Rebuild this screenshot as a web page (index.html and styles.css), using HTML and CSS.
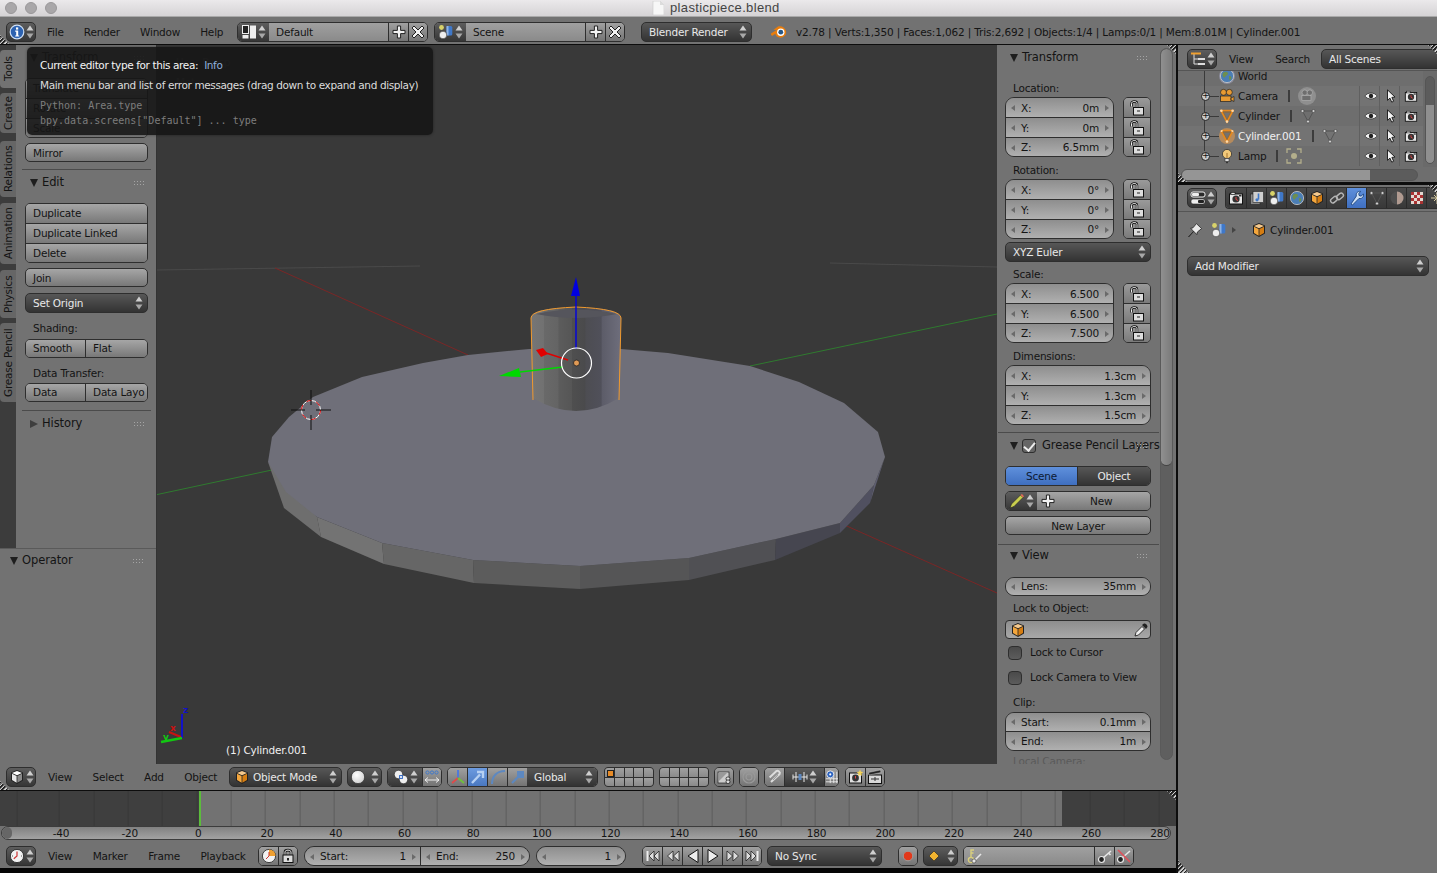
FILE: index.html
```html
<!DOCTYPE html>
<html lang="en">
<head>
<meta charset="utf-8">
<title>plasticpiece.blend</title>
<link rel="stylesheet" href="styles.css">
</head>
<body>
<svg class="defs" width="0" height="0" aria-hidden="true">
  <defs>
    <symbol id="updown" viewBox="0 0 8 14"><path d="M4 0.5 7.5 5.5H0.5Z" fill="#cfcfcf"/><path d="M4 13.5 7.5 8.5H0.5Z" fill="#a8a8a8"/></symbol>
    <symbol id="info" viewBox="0 0 16 16"><circle cx="8" cy="8" r="6.8" fill="#2d62b0" stroke="#cfe0f5" stroke-width="1.2"/><rect x="7" y="3.4" width="2.2" height="2.2" fill="#fff"/><path d="M6.2 6.6H9.2V11.4H10.2V12.6H6.2V11.4H7.2V7.8H6.2Z" fill="#fff"/></symbol>
    <symbol id="layout" viewBox="0 0 16 16"><rect x="1.5" y="1.5" width="6" height="8" fill="#222" stroke="#eee"/><rect x="9" y="1.5" width="6" height="13" fill="#eee"/><rect x="1.5" y="11" width="6" height="3.5" fill="#eee"/></symbol>
    <symbol id="plus" viewBox="0 0 16 16"><path d="M6.4 2H9.6V6.4H14V9.6H9.6V14H6.4V9.6H2V6.4H6.4Z" fill="#f2f2f2" stroke="#222" stroke-width="1"/></symbol>
    <symbol id="cross" viewBox="0 0 16 16"><path d="M4 2 8 6 12 2 14 4 10 8 14 12 12 14 8 10 4 14 2 12 6 8 2 4Z" fill="#f2f2f2" stroke="#222" stroke-width="1"/></symbol>
    <symbol id="scene" viewBox="0 0 16 16"><circle cx="3.5" cy="3.5" r="2.4" fill="#d8d26a"/><rect x="8.5" y="2" width="5.8" height="9.5" rx="1.5" fill="#3f78c9"/><rect x="8.5" y="2" width="2" height="9.5" fill="#8fb4e6"/><circle cx="5" cy="11" r="3.8" fill="#eee" stroke="#333" stroke-width=".6"/></symbol>
    <symbol id="logo" viewBox="0 0 18 16"><path d="M1 9.5 6.5 6 3.5 5.8 8 2.5C11 1.6 15 3 16 7 17 11.4 13 14 9.5 13.6 7 13.3 5.6 11.6 5.3 9.8L2.4 11.8C1.6 12 .6 10.4 1 9.5Z" fill="#e87d0d"/><circle cx="10.8" cy="8.2" r="3.7" fill="#fff"/><circle cx="10.8" cy="8.2" r="2.4" fill="#265787"/></symbol>
    <symbol id="cube" viewBox="0 0 16 16"><path d="M8 1 14 3.5V11.5L8 15 2 11.5V3.5Z" fill="#222"/><path d="M8 2 13 4 8 6.2 3 4Z" fill="#f5c98d"/><path d="M3 4.8 7.6 7V13.8L3 11Z" fill="#f4a63c"/><path d="M13 4.8 8.4 7V13.8L13 11Z" fill="#d57d12"/></symbol>
    <symbol id="cube3d" viewBox="0 0 16 16"><path d="M8 1 14 3.5V11.5L8 15 2 11.5V3.5Z" fill="#222"/><path d="M8 2 13 4 8 6.2 3 4Z" fill="#fff"/><path d="M3 4.8 7.6 7V13.8L3 11Z" fill="#e8e8e8"/><path d="M13 4.8 8.4 7V13.8L13 11Z" fill="#8a8a8a"/></symbol>
    <symbol id="lock" viewBox="0 0 16 16"><path d="M2.5 6.5V3.5C2.5.8 8 .8 8 3.5V8" fill="none" stroke="#111" stroke-width="2.4"/><path d="M2.5 6.5V3.5C2.5.8 8 .8 8 3.5V8" fill="none" stroke="#eee" stroke-width="1"/><rect x="4.5" y="7.5" width="10" height="7.5" fill="#ddd" stroke="#111"/><rect x="8" y="10.5" width="3" height="1" fill="#222"/></symbol>
    <symbol id="lockc" viewBox="0 0 16 16"><path d="M5 7V4C5 1.5 11 1.5 11 4V7" fill="none" stroke="#111" stroke-width="2.6"/><path d="M5 7V4C5 1.5 11 1.5 11 4V7" fill="none" stroke="#eee" stroke-width="1"/><rect x="3" y="7" width="10" height="7.5" fill="#ddd" stroke="#111"/><rect x="7" y="10" width="2" height="2.5" fill="#222"/></symbol>
    <symbol id="eye" viewBox="0 0 16 16"><path d="M1 8C4 3.5 12 3.5 15 8 12 12.5 4 12.5 1 8Z" fill="#f3f3f3" stroke="#222" stroke-width=".8"/><circle cx="8" cy="8" r="2.5" fill="#222"/></symbol>
    <symbol id="arrow" viewBox="0 0 16 16"><path d="M4 1V13L6.8 10.4 8.8 15 11 14 9 9.6 12.6 9.2Z" fill="#f3f3f3" stroke="#111"/></symbol>
    <symbol id="rcam" viewBox="0 0 16 16"><rect x="1.5" y="4" width="13" height="10" fill="#e8e8e8" stroke="#111"/><rect x="3" y="2.5" width="4" height="2" fill="#e8e8e8" stroke="#111" stroke-width=".6"/><circle cx="8" cy="9" r="3.6" fill="#333"/><path d="M8 7V9.5L10 10.5" stroke="#d44" fill="none"/><rect x="11" y="5" width="2.5" height="1.5" fill="#333"/></symbol>
    <symbol id="mesh" viewBox="0 0 16 16"><path d="M2 2.5H14L8 14Z" fill="#8c6a3f" stroke="#e8891c" stroke-width="1.6"/><path d="M5 4.8H11L8 10.8Z" fill="#727272"/><circle cx="2.4" cy="2.8" r="1.3" fill="#ffd9a8"/><circle cx="13.6" cy="2.8" r="1.3" fill="#ffd9a8"/><circle cx="8" cy="13.6" r="1.3" fill="#ffd9a8"/></symbol>
    <symbol id="meshg" viewBox="0 0 16 16"><path d="M2.5 3H13.5L8 13.5Z" fill="none" stroke="#555" stroke-width="1"/><circle cx="2.5" cy="3" r="1.5" fill="#cfcfcf" stroke="#333" stroke-width=".5"/><circle cx="13.5" cy="3" r="1.5" fill="#cfcfcf" stroke="#333" stroke-width=".5"/><circle cx="8" cy="13.5" r="1.5" fill="#cfcfcf" stroke="#333" stroke-width=".5"/></symbol>
    <symbol id="camobj" viewBox="0 0 16 16"><circle cx="4.5" cy="4.3" r="3" fill="#e89a32" stroke="#222" stroke-width=".7"/><circle cx="10.3" cy="4.3" r="3" fill="#e89a32" stroke="#222" stroke-width=".7"/><rect x="1.5" y="8" width="10.5" height="5.5" fill="#e89a32" stroke="#222" stroke-width=".7"/><path d="M12 10 15 8.5V13.5L12 12Z" fill="#e89a32" stroke="#222" stroke-width=".7"/></symbol>
    <symbol id="lamp" viewBox="0 0 16 16"><circle cx="8" cy="6" r="4.6" fill="#f2c97a" stroke="#333" stroke-width=".8"/><path d="M8 5V10" stroke="#a5722a"/><rect x="6" y="10.5" width="4" height="3.2" fill="#ddd" stroke="#333" stroke-width=".6"/><rect x="7" y="13.6" width="2" height="1.6" fill="#333"/></symbol>
    <symbol id="world" viewBox="0 0 16 16"><circle cx="8" cy="8" r="6.6" fill="#4b7eb5" stroke="#ccc" stroke-width=".8"/><path d="M4 5C6 3 9 3.5 9 6 8 8 6 7.5 6 9.5 4 10 3 7 4 5ZM10 8C12 7.5 13 9 12 11 11 12.5 9.5 12 10 10Z" fill="#6e8f4e"/></symbol>
    <symbol id="outliner" viewBox="0 0 16 16"><path d="M4 3V13H8M4 8H8" fill="none" stroke="#ddd"/><rect x="1" y="1.5" width="10" height="2" fill="#f0a030"/><rect x="8" y="7" width="7" height="2" fill="#ddd"/><rect x="8" y="12" width="7" height="2" fill="#ddd"/></symbol>
    <symbol id="propsicon" viewBox="0 0 16 16"><rect x="1" y="2" width="14" height="5" rx="2" fill="#2a2a2a" stroke="#eee"/><rect x="1" y="9" width="14" height="5" rx="2" fill="#eee" stroke="#222" stroke-width=".6"/><rect x="2" y="3" width="7" height="3" rx="1" fill="#eee"/><rect x="8" y="10" width="6" height="3" rx="1" fill="#222"/></symbol>
    <symbol id="renderlayer" viewBox="0 0 16 16"><rect x="1.5" y="4" width="9.5" height="10.5" fill="#8a8a8a" stroke="#222" stroke-width=".6"/><rect x="4" y="1.5" width="10.5" height="11" fill="#cfcfcf" stroke="#222" stroke-width=".6"/><path d="M9.5 3.5V9.5" stroke="#3f78c9" stroke-width="1.6"/><circle cx="8" cy="9.8" r="1.6" fill="#3f78c9"/></symbol>
    <symbol id="link" viewBox="0 0 16 16"><rect x="1.5" y="7.5" width="7.5" height="4.5" rx="2.2" transform="rotate(-40 5 10)" fill="none" stroke="#b5b5b5" stroke-width="1.4"/><rect x="7" y="4" width="7.5" height="4.5" rx="2.2" transform="rotate(-40 11 6)" fill="none" stroke="#b5b5b5" stroke-width="1.4"/></symbol>
    <symbol id="wrench" viewBox="0 0 16 16"><path d="M2 14 3.5 15 10 8.4C12.6 9.2 15 7 14.4 4L12 6.2 10 5.4 9.8 3.6 11.6 1.4C8.6 1 6.6 3.4 7.4 6Z" fill="#cfe0f5" stroke="#103a73" stroke-width=".8"/></symbol>
    <symbol id="material" viewBox="0 0 16 16"><circle cx="8" cy="8" r="6.5" fill="#4e4e4e"/><path d="M8 1.5A6.5 6.5 0 0 1 8 14.5Z" fill="#b09a90"/></symbol>
    <symbol id="texture" viewBox="0 0 16 16"><rect x="2" y="2" width="12" height="12" fill="#e3d9d2"/><path d="M2 2H5V5H2ZM8 2H11V5H8ZM5 5H8V8H5ZM11 5H14V8H11ZM2 8H5V11H2ZM8 8H11V11H8ZM5 11H8V14H5ZM11 11H14V14H11Z" fill="#a33"/></symbol>
    <symbol id="particle" viewBox="0 0 16 16"><path d="M8 2V14M2 8H14M5 5 11 11M11 5 5 11" stroke="#d6cba0" stroke-width="1"/></symbol>
    <symbol id="pin" viewBox="0 0 16 16"><path d="M1.5 15 6.6 9.2 3.6 6.4 6 5.8 9.4 1.6 14.6 6.6 10.4 10 9.8 12.6 6.8 9.4Z" fill="#e8e8e8" stroke="#222" stroke-width=".8"/></symbol>
    <symbol id="picker" viewBox="0 0 16 16"><path d="M2 14 3 10.5 9 4.5 11.5 7 5.5 13Z" fill="#eee" stroke="#111" stroke-width=".8"/><path d="M9 3 11 1.5C12.5.8 15 3.5 14.4 5L13 7Z" fill="#222"/></symbol>
    <symbol id="pencil" viewBox="0 0 16 16"><path d="M1 15 2.5 11 11.5 2 14 4.5 5 13.5Z" fill="#c9ce4e" stroke="#222" stroke-width=".6"/><path d="M11.5 2 14 4.5 15 3.2 13 1Z" fill="#e76b58"/></symbol>
    <symbol id="sphere" viewBox="0 0 16 16"><defs><radialGradient id="sg" cx=".4" cy=".35" r=".7"><stop offset="0" stop-color="#fff"/><stop offset="1" stop-color="#cfcfcf"/></radialGradient></defs><circle cx="8" cy="8" r="6.6" fill="url(#sg)" stroke="#222" stroke-width=".6"/></symbol>
    <symbol id="pivot" viewBox="0 0 16 16"><circle cx="5.5" cy="5.5" r="4.2" fill="#eee" stroke="#222" stroke-width=".6"/><circle cx="10.5" cy="10.5" r="4.2" fill="#eee" stroke="#222" stroke-width=".6"/><rect x="6.6" y="6.6" width="2.8" height="2.8" fill="#fff" stroke="#2a62c0"/></symbol>
    <symbol id="pointsel" viewBox="0 0 16 16"><circle cx="3.5" cy="3.5" r="1.6" fill="none" stroke="#3f78c9"/><circle cx="8" cy="3.5" r="1.6" fill="none" stroke="#3f78c9"/><circle cx="12.5" cy="3.5" r="1.6" fill="none" stroke="#3f78c9"/><path d="M1 11H15M1 11 4 8.5M1 11 4 13.5M15 11 12 8.5M15 11 12 13.5" stroke="#eee" fill="none"/></symbol>
    <symbol id="manip" viewBox="0 0 16 16"><path d="M8 9V1" stroke="#4a78e0" stroke-width="1.8"/><path d="M8 9 2 14" stroke="#e04a4a" stroke-width="1.8"/><path d="M8 9 14 14" stroke="#6fc23a" stroke-width="1.8"/></symbol>
    <symbol id="translate" viewBox="0 0 16 16"><path d="M2 14 10 5.5M7 3H13V9" fill="none" stroke="#b6d0f2" stroke-width="2.4"/></symbol>
    <symbol id="rotate" viewBox="0 0 16 16"><path d="M2 15C2 7 7 2 15 2" fill="none" stroke="#5d88c0" stroke-width="2"/></symbol>
    <symbol id="scale" viewBox="0 0 16 16"><path d="M2 14 9 7" stroke="#5d88c0" stroke-width="2.2"/><rect x="7" y="2" width="7" height="7" fill="#5d88c0"/></symbol>
    <symbol id="locklayer" viewBox="0 0 16 16"><rect x="2" y="3" width="11" height="11" fill="#ccc" stroke="#222" stroke-width=".7"/><path d="M3 12 12 3H3Z" fill="#999"/><rect x="10" y="8" width="4" height="3.5" rx="1.7" fill="#ddd" stroke="#222" stroke-width=".8"/><rect x="10" y="11" width="4" height="3.5" rx="1.7" fill="#ddd" stroke="#222" stroke-width=".8"/></symbol>
    <symbol id="proportional" viewBox="0 0 16 16"><circle cx="8" cy="8" r="6" fill="none" stroke="#999" stroke-width="1.2"/><circle cx="8" cy="8" r="3" fill="none" stroke="#999" stroke-width="1.2"/></symbol>
    <symbol id="magnet" viewBox="0 0 16 16"><path d="M4 13 12.6 5C13.7 3.2 11 1 9.2 2.2L2.6 8.5" fill="none" stroke="#ddd" stroke-width="2"/><path d="M5 9.5 9.2 5.4C9.8 5 11 6 10.4 6.8L6 11" fill="none" stroke="#999" stroke-width="1"/></symbol>
    <symbol id="snapinc" viewBox="0 0 16 16"><path d="M4 3V13M12 3V13M1 8H15M1 5.5V10.5M15 5.5V10.5" stroke="#e8e8e8"/><rect x="6.5" y="5" width="3" height="6" fill="#5d88c0"/></symbol>
    <symbol id="snapgrid" viewBox="0 0 16 16"><path d="M10 2V15M13.5 2V15M1 10H15M1 13.5H15M6 10V15" stroke="#eee"/><circle cx="6" cy="5" r="4" fill="#2a62c0" stroke="#eee"/><circle cx="6" cy="5" r="1.2" fill="#fff"/></symbol>
    <symbol id="rstill" viewBox="0 0 16 16"><rect x="1.5" y="4" width="12" height="10" fill="#e0e0e0" stroke="#111"/><circle cx="7.5" cy="9" r="3.4" fill="#333"/><path d="M7.5 7V9.5" stroke="#d44"/><path d="M12 0.5 13 2.7 15.4 3 13.6 4.6 14 7 12 5.7 10 7 10.4 4.6 8.6 3 11 2.7Z" fill="#f2d25a"/></symbol>
    <symbol id="ranim" viewBox="0 0 16 16"><rect x="1.5" y="6" width="13" height="8.5" fill="#d8d8d8" stroke="#111"/><path d="M1.5 3.5 13.5 1 14 3.5 2 6Z" fill="#222" stroke="#ddd" stroke-width=".4"/><path d="M4 10H12" stroke="#333"/><path d="M8 8V12" stroke="#333"/></symbol>
    <symbol id="clock" viewBox="0 0 16 16"><circle cx="8" cy="8" r="6.6" fill="#f2f2f2" stroke="#222" stroke-width=".8"/><path d="M8 3.6V8L4.8 10.8" fill="none" stroke="#c33" stroke-width="1.2"/><path d="M3.2 8H4M12 8H12.8" stroke="#333"/></symbol>
    <symbol id="preview" viewBox="0 0 16 16"><circle cx="8" cy="8" r="6.6" fill="#f2f2f2" stroke="#222" stroke-width=".8"/><path d="M8 1.4A6.6 6.6 0 0 1 14.6 8H8Z" fill="#f0a030"/><path d="M8 4V8L5 11" fill="none" stroke="#c33"/></symbol>
    <symbol id="tstart" viewBox="0 0 16 16"><path d="M2.5 3V13" stroke="#eee" stroke-width="2"/><path d="M9 3 4 8 9 13ZM14 3 9 8 14 13Z" fill="#ddd" stroke="#111" stroke-width=".7"/></symbol>
    <symbol id="tprev" viewBox="0 0 16 16"><path d="M8 3 2.5 8 8 13ZM14 3 8.5 8 14 13Z" fill="#ddd" stroke="#111" stroke-width=".7"/></symbol>
    <symbol id="tback" viewBox="0 0 16 16"><path d="M13 1.5V14.5L3 8Z" fill="#eee" stroke="#111"/></symbol>
    <symbol id="tplay" viewBox="0 0 16 16"><path d="M3 1.5V14.5L13 8Z" fill="#eee" stroke="#111"/></symbol>
    <symbol id="tnext" viewBox="0 0 16 16"><path d="M2 3 7.5 8 2 13ZM8 3 13.5 8 8 13Z" fill="#ddd" stroke="#111" stroke-width=".7"/></symbol>
    <symbol id="tend" viewBox="0 0 16 16"><path d="M13.5 3V13" stroke="#eee" stroke-width="2"/><path d="M2 3 7 8 2 13ZM7 3 12 8 7 13Z" fill="#ddd" stroke="#111" stroke-width=".7"/></symbol>
    <symbol id="record" viewBox="0 0 16 16"><circle cx="8" cy="8" r="4.8" fill="#e2381a" stroke="#9c9c9c"/></symbol>
    <symbol id="diamond" viewBox="0 0 16 16"><path d="M8 3 13 8 8 13 3 8Z" fill="#f2b430" stroke="#222" stroke-width=".6"/></symbol>
    <symbol id="keying" viewBox="0 0 16 16"><circle cx="4" cy="12" r="2.6" fill="none" stroke="#d9cf7c" stroke-width="1.4"/><path d="M4 9.5V2H7M4 5H6.5" fill="none" stroke="#d9cf7c" stroke-width="1.4"/><path d="M8 12 14 6" stroke="#e6e6e6" stroke-width="1.6"/><circle cx="7" cy="13" r="2" fill="#e6e6e6" stroke="#222" stroke-width=".5"/></symbol>
    <symbol id="key" viewBox="0 0 16 16"><circle cx="4.5" cy="11.5" r="3" fill="#222" stroke="#e6e6e6" stroke-width="1.2"/><path d="M6.5 9.5 14 3M11.5 5 13.5 7" stroke="#e6e6e6" stroke-width="1.6" fill="none"/></symbol>
    <symbol id="keyx" viewBox="0 0 16 16"><circle cx="4.5" cy="11.5" r="3" fill="#222" stroke="#e6e6e6" stroke-width="1.2"/><path d="M6.5 9.5 14 3" stroke="#e6e6e6" stroke-width="1.6" fill="none"/><path d="M2 2 14 14" stroke="#e0505a" stroke-width="1.6"/></symbol>
    <symbol id="camgray" viewBox="0 0 16 16"><circle cx="8" cy="8" r="8" fill="#8f8f8f"/><circle cx="6" cy="5" r="2.4" fill="#6e6e6e" stroke="#bbb" stroke-width=".5"/><circle cx="10.5" cy="5" r="2.4" fill="#6e6e6e" stroke="#bbb" stroke-width=".5"/><rect x="3.5" y="7.6" width="8" height="4.4" fill="#6e6e6e" stroke="#bbb" stroke-width=".5"/></symbol>
    <symbol id="lampdata" viewBox="0 0 16 16"><circle cx="8" cy="8" r="3" fill="#b3ae8c"/><path d="M1 5V1H5M11 1H15V5M15 11V15H11M5 15H1V11" fill="none" stroke="#b3ae8c" stroke-width="1.3"/></symbol>
    <symbol id="grip" viewBox="0 0 12 5"><path d="M0 0h1v1H0zM3 0h1v1H3zM6 0h1v1H6zM9 0h1v1H9zM0 3h1v1H0zM3 3h1v1H3zM6 3h1v1H6zM9 3h1v1H9z" fill="#a5a5a5"/></symbol>
  </defs>
</svg>

<header class="titlebar">
  <div class="lights"><i></i><i></i><i></i></div>
  <div class="doc">
    <svg class="docicon" viewBox="0 0 12 14"><path d="M1 0H8L12 4V14H1Z" fill="#f7f7f7" stroke="#c9c9c9" stroke-width=".6"/><path d="M8 0V4H12" fill="#dcdcdc"/></svg>
    <span>plasticpiece.blend</span>
  </div>
</header>

<div class="topbar">
  <span class="corner corner-tl"></span>
  <div class="ddicon"><svg class="ic16"><use href="#info"/></svg><svg class="ud"><use href="#updown"/></svg></div>
  <nav class="menu m-top"><span>File</span><span>Render</span><span>Window</span><span>Help</span></nav>
  <div class="wgroup w-screen">
    <div class="gicon"><svg class="ic16"><use href="#layout"/></svg><svg class="ud"><use href="#updown"/></svg></div>
    <div class="gfield">Default</div>
    <div class="gbtn"><svg class="ic16"><use href="#plus"/></svg></div>
    <div class="gbtn"><svg class="ic16"><use href="#cross"/></svg></div>
  </div>
  <div class="wgroup w-screen ml6">
    <div class="gicon"><svg class="ic16"><use href="#scene"/></svg><svg class="ud"><use href="#updown"/></svg></div>
    <div class="gfield">Scene</div>
    <div class="gbtn"><svg class="ic16"><use href="#plus"/></svg></div>
    <div class="gbtn"><svg class="ic16"><use href="#cross"/></svg></div>
  </div>
  <div class="drop w-render">Blender Render<svg class="ud"><use href="#updown"/></svg></div>
  <svg class="toplogo"><use href="#logo"/></svg>
  <div class="stats">v2.78 | Verts:1,350 | Faces:1,062 | Tris:2,692 | Objects:1/4 | Lamps:0/1 | Mem:8.01M | Cylinder.001</div>
</div>

<main class="workspace">
  <section class="leftcol">
    <div class="view3d">
      <div class="shelfcol">
        <div class="shelftop">
          <div class="tabs">
            <span class="tab t-tools active">Tools</span>
            <span class="tab t-create">Create</span>
            <span class="tab t-rel">Relations</span>
            <span class="tab t-anim">Animation</span>
            <span class="tab t-phys">Physics</span>
            <span class="tab t-gp">Grease Pencil</span>
          </div>
          <div class="shelf">
            <div class="phead mt3"><i class="tri down"></i>Transform<svg class="grip"><use href="#grip"/></svg></div>
            <div class="grp mt10"><div class="row btn">Translate</div><div class="row btn">Rotate</div><div class="row btn">Scale</div></div>
            <div class="single btn mt5">Mirror</div>
            <div class="sep mt7"></div>
            <div class="phead mt3"><i class="tri down"></i>Edit<svg class="grip"><use href="#grip"/></svg></div>
            <div class="grp mt10"><div class="row btn">Duplicate</div><div class="row btn">Duplicate Linked</div><div class="row btn">Delete</div></div>
            <div class="single btn mt5">Join</div>
            <div class="drop full mt6">Set Origin<svg class="ud"><use href="#updown"/></svg></div>
            <div class="label mt7">Shading:</div>
            <div class="split mt3"><div class="btn s60">Smooth</div><div class="btn sflex">Flat</div></div>
            <div class="label mt7">Data Transfer:</div>
            <div class="split mt2"><div class="btn s60">Data</div><div class="btn sflex">Data Layo</div></div>
            <div class="sep mt8"></div>
            <div class="phead mt3"><i class="tri right"></i>History<svg class="grip"><use href="#grip"/></svg></div>
          </div>
        </div>
        <div class="operator"><div class="phead ophead"><i class="tri down"></i>Operator<svg class="grip"><use href="#grip"/></svg></div></div>
      </div>

      <div class="canvas">
        <svg class="scene3d" viewBox="157 45 840 719" width="840" height="719">
          <defs>
            <linearGradient id="cyl" x1="0" x2="1" y1="0" y2="0">
              <stop offset="0" stop-color="#767676"/><stop offset=".14" stop-color="#717171"/>
              <stop offset=".15" stop-color="#696969"/><stop offset=".3" stop-color="#646464"/>
              <stop offset=".31" stop-color="#5c5c5c"/><stop offset=".45" stop-color="#565656"/>
              <stop offset=".46" stop-color="#4f4f4f"/><stop offset=".6" stop-color="#4a4a4c"/>
              <stop offset=".61" stop-color="#4d4d52"/><stop offset=".78" stop-color="#50505a"/>
              <stop offset=".79" stop-color="#5c5c68"/><stop offset="1" stop-color="#6e6e7c"/>
            </linearGradient>
          </defs>
          <rect x="157" y="45" width="840" height="719" fill="#393939"/>
          <path d="M157 270 420 266M830 263 997 267" stroke="#4a4a4a" fill="none"/>
          <path d="M275 268 468 355M840 523 997 593" stroke="#7a2626" fill="none"/>
          <path d="M155 495 272 470M750 366 997 314" stroke="#2f7a2f" fill="none"/>

          <path d="M268 462 317 517 321 537 284 508Z" fill="#6e6e6e"/>
          <path d="M317 517 382 543 384 564 321 537Z" fill="#737373"/>
          <path d="M382 543 473 560 474 583 384 564Z" fill="#666"/>
          <path d="M473 560 580 566 580 589 474 583Z" fill="#5c5c5c"/>
          <path d="M580 566 689 558 689 580 580 589Z" fill="#555556"/>
          <path d="M689 558 776 539 775 560 689 580Z" fill="#505054"/>
          <path d="M776 539 840 523 840 533 775 560Z" fill="#464650"/>
          <path d="M840 523 874 485 870 503 840 533Z" fill="#505060"/>
          <path d="M874 485 885 457 870 503Z" fill="#5e5e70"/>
          <path d="M268 462 272 437 289 417 313 397 362 377 423 363 468 355 529 349 621 349 668 353 750 366 799 382 844 403 878 432 885 457 874 485 840 523 776 539 689 558 580 566 473 560 382 543 317 517 286 492Z" fill="#6f6f79"/>

          <path d="M531 318 533 398Q576 424 619 398L621 318Q621 308 576 307 531 308 531 318Z" fill="url(#cyl)"/>
          <path d="M536 314Q576 305 617 314 576 322 536 314Z" fill="#55555c"/>
          <path d="M533 400 531 318Q531 309 576 307 621 309 621 318L619 400" fill="none" stroke="#f19a2e" stroke-width="1"/>

          <path d="M576 349V296" stroke="#0000e0" stroke-width="1.4"/>
          <path d="M576 277 580 296H571Z" fill="#0000e0"/>
          <path d="M568 360 546 353" stroke="#e00000" stroke-width="1.4"/>
          <path d="M536 350 543 348 548 354 541 357Z" fill="#e00000"/>
          <path d="M563 367 520 372" stroke="#00d800" stroke-width="1.4"/>
          <path d="M499 376 519 368 521 377Z" fill="#00d800"/>
          <circle cx="576.5" cy="363" r="15" fill="none" stroke="#fff" stroke-width="1.2"/>
          <circle cx="576.5" cy="363" r="3" fill="#e09a55" stroke="#222" stroke-width=".8"/>

          <circle cx="311" cy="410" r="9.5" fill="none" stroke="#fff" stroke-width="1"/>
          <circle cx="311" cy="410" r="9.5" fill="none" stroke="#e00000" stroke-width="1" stroke-dasharray="5 5"/>
          <path d="M311 390V405M311 415V430M291 410H305M316 410H331" stroke="#111" stroke-width="1"/>

          <path d="M182 738V714" stroke="#1212c8" stroke-width="2"/>
          <path d="M181 737 169 732" stroke="#c81212" stroke-width="2"/>
          <path d="M182 738 161 742" stroke="#12c812" stroke-width="2.4"/>
          <text class="axis az" x="183" y="713">z</text>
          <text class="axis ax" x="170" y="731">x</text>
          <text class="axis ay" x="163" y="740">y</text>

          <text class="overlay" x="226" y="754">(1) Cylinder.001</text>
          <text class="overlay dim" x="176" y="66">User Persp</text>
          <text class="overlay dim" x="176" y="86">Meters</text>
        </svg>
      </div>

      <aside class="npanel">
        <span class="corner corner-tr"></span>
        <div class="ncontent">
          <div class="phead mt3"><i class="tri down"></i>Transform<svg class="grip"><use href="#grip"/></svg></div>
          <div class="label mt12">Location:</div>
          <div class="vecrow mt1">
            <div class="grp fields">
              <div class="row num"><i class="al"></i><span>X:</span><b>0m</b><i class="ar"></i></div>
              <div class="row num"><i class="al"></i><span>Y:</span><b>0m</b><i class="ar"></i></div>
              <div class="row num"><i class="al"></i><span>Z:</span><b>6.5mm</b><i class="ar"></i></div>
            </div>
            <div class="grp locks">
              <div class="row lockb"><svg class="ic16"><use href="#lock"/></svg></div>
              <div class="row lockb"><svg class="ic16"><use href="#lock"/></svg></div>
              <div class="row lockb"><svg class="ic16"><use href="#lock"/></svg></div>
            </div>
          </div>
          <div class="label mt5">Rotation:</div>
          <div class="vecrow mt1">
            <div class="grp fields">
              <div class="row num"><i class="al"></i><span>X:</span><b>0°</b><i class="ar"></i></div>
              <div class="row num"><i class="al"></i><span>Y:</span><b>0°</b><i class="ar"></i></div>
              <div class="row num"><i class="al"></i><span>Z:</span><b>0°</b><i class="ar"></i></div>
            </div>
            <div class="grp locks">
              <div class="row lockb"><svg class="ic16"><use href="#lock"/></svg></div>
              <div class="row lockb"><svg class="ic16"><use href="#lock"/></svg></div>
              <div class="row lockb"><svg class="ic16"><use href="#lock"/></svg></div>
            </div>
          </div>
          <div class="drop full mt3">XYZ Euler<svg class="ud"><use href="#updown"/></svg></div>
          <div class="label mt4">Scale:</div>
          <div class="vecrow mt1">
            <div class="grp fields">
              <div class="row num"><i class="al"></i><span>X:</span><b>6.500</b><i class="ar"></i></div>
              <div class="row num"><i class="al"></i><span>Y:</span><b>6.500</b><i class="ar"></i></div>
              <div class="row num"><i class="al"></i><span>Z:</span><b>7.500</b><i class="ar"></i></div>
            </div>
            <div class="grp locks">
              <div class="row lockb"><svg class="ic16"><use href="#lock"/></svg></div>
              <div class="row lockb"><svg class="ic16"><use href="#lock"/></svg></div>
              <div class="row lockb"><svg class="ic16"><use href="#lock"/></svg></div>
            </div>
          </div>
          <div class="label mt5">Dimensions:</div>
          <div class="grp wide mt1">
            <div class="row num"><i class="al"></i><span>X:</span><b>1.3cm</b><i class="ar"></i></div>
            <div class="row num"><i class="al"></i><span>Y:</span><b>1.3cm</b><i class="ar"></i></div>
            <div class="row num"><i class="al"></i><span>Z:</span><b>1.5cm</b><i class="ar"></i></div>
          </div>
          <div class="sep nsep mt7"></div>
          <div class="phead haschk mt3"><i class="tri down"></i><i class="check"></i>Grease Pencil Layers<svg class="grip"><use href="#grip"/></svg></div>
          <div class="tabs2 mt10"><div class="tab2 on">Scene</div><div class="tab2">Object</div></div>
          <div class="newrow mt5">
            <div class="gicon pen"><svg class="ic16"><use href="#pencil"/></svg><svg class="ud"><use href="#updown"/></svg></div>
            <div class="newbody"><svg class="ic16"><use href="#plus"/></svg><span>New</span></div>
          </div>
          <div class="single btn center mt5">New Layer</div>
          <div class="sep nsep mt9"></div>
          <div class="phead mt1"><i class="tri down"></i>View<svg class="grip"><use href="#grip"/></svg></div>
          <div class="grp wide pill mt11"><div class="row num"><i class="al"></i><span>Lens:</span><b>35mm</b><i class="ar"></i></div></div>
          <div class="label mt4">Lock to Object:</div>
          <div class="objfield mt4"><svg class="ic16"><use href="#cube"/></svg><svg class="ic16"><use href="#picker"/></svg></div>
          <div class="chk mt5"><i></i>Lock to Cursor</div>
          <div class="chk mt8"><i></i>Lock Camera to View</div>
          <div class="label mt8">Clip:</div>
          <div class="grp wide two mt2">
            <div class="row num"><i class="al"></i><span>Start:</span><b>0.1mm</b><i class="ar"></i></div>
            <div class="row num"><i class="al"></i><span>End:</span><b>1m</b><i class="ar"></i></div>
          </div>
          <div class="label mt2 faded">Local Camera:</div>
        </div>
        <div class="nscroll"><div class="nthumb"></div></div>
      </aside>
    </div>

    <div class="hdr hdr3d">
      <span class="corner corner-bl"></span>
      <div class="ddicon"><svg class="ic16"><use href="#cube3d"/></svg><svg class="ud"><use href="#updown"/></svg></div>
      <nav class="menu m-3d"><span>View</span><span>Select</span><span>Add</span><span>Object</span></nav>
      <div class="drop w-mode"><svg class="ic16 mr3"><use href="#cube"/></svg>Object Mode<svg class="ud"><use href="#updown"/></svg></div>
      <div class="ddicon w-shade ml5"><svg class="ic16"><use href="#sphere"/></svg><svg class="ud"><use href="#updown"/></svg></div>
      <div class="wgroup ml5">
        <div class="gicon w-piv"><svg class="ic16"><use href="#pivot"/></svg><svg class="ud"><use href="#updown"/></svg></div>
        <div class="gbtn"><svg class="ic16"><use href="#pointsel"/></svg></div>
      </div>
      <div class="wgroup ml5">
        <div class="gbtn"><svg class="ic16"><use href="#manip"/></svg></div>
        <div class="gbtn blue"><svg class="ic16"><use href="#translate"/></svg></div>
        <div class="gbtn"><svg class="ic16"><use href="#rotate"/></svg></div>
        <div class="gbtn"><svg class="ic16"><use href="#scale"/></svg></div>
        <div class="darkdrop">Global<svg class="ud"><use href="#updown"/></svg></div>
      </div>
      <div class="layers ml6 first"><i></i><i></i><i></i><i></i><i></i><i></i><i></i><i></i><i></i><i></i></div>
      <div class="layers ml5"><i></i><i></i><i></i><i></i><i></i><i></i><i></i><i></i><i></i><i></i></div>
      <div class="wgroup ml5"><div class="gbtn"><svg class="ic16"><use href="#locklayer"/></svg></div></div>
      <div class="wgroup ml5"><div class="gbtn"><svg class="ic16"><use href="#proportional"/></svg></div></div>
      <div class="wgroup ml5">
        <div class="gbtn"><svg class="ic16"><use href="#magnet"/></svg></div>
        <div class="gicon w-snap"><svg class="ic16"><use href="#snapinc"/></svg><svg class="ud"><use href="#updown"/></svg></div>
        <div class="gbtn w-sg"><svg class="ic14"><use href="#snapgrid"/></svg></div>
      </div>
      <div class="wgroup ml6">
        <div class="gbtn"><svg class="ic16"><use href="#rstill"/></svg></div>
        <div class="gbtn"><svg class="ic16"><use href="#ranim"/></svg></div>
      </div>
    </div>

    <div class="timeline">
      <span class="corner corner-tr2"></span>
      <div class="tracks">
        <div class="outrange r-left"></div>
        <div class="playhead"></div>
        <div class="inrange"></div>
        <div class="outrange r-right"></div>
      </div>
      <div class="ruler">
        <span>-40</span><span>-20</span><span>0</span><span>20</span><span>40</span><span>60</span><span>80</span><span>100</span><span>120</span><span>140</span><span>160</span><span>180</span><span>200</span><span>220</span><span>240</span><span>260</span><span>280</span>
      </div>
    </div>

    <div class="hdr hdrtime">
      <div class="ddicon"><svg class="ic16"><use href="#clock"/></svg><svg class="ud"><use href="#updown"/></svg></div>
      <nav class="menu m-time"><span>View</span><span>Marker</span><span>Frame</span><span>Playback</span></nav>
      <div class="wgroup">
        <div class="gbtn"><svg class="ic16"><use href="#preview"/></svg></div>
        <div class="gbtn"><svg class="ic16"><use href="#lockc"/></svg></div>
      </div>
      <div class="grp pill2 ml6 w-range">
        <div class="num rangecell c-start"><i class="al"></i><span>Start:</span><b>1</b><i class="ar"></i></div>
        <div class="num rangecell c-end"><i class="al"></i><span>End:</span><b>250</b><i class="ar"></i></div>
      </div>
      <div class="grp pill2 ml6 w-cur"><div class="num rangecell c-cur"><i class="al"></i><b>1</b><i class="ar"></i></div></div>
      <div class="wgroup ml16">
        <div class="gbtn"><svg class="ic16"><use href="#tstart"/></svg></div>
        <div class="gbtn"><svg class="ic16"><use href="#tprev"/></svg></div>
        <div class="gbtn"><svg class="ic16"><use href="#tback"/></svg></div>
        <div class="gbtn"><svg class="ic16"><use href="#tplay"/></svg></div>
        <div class="gbtn"><svg class="ic16"><use href="#tnext"/></svg></div>
        <div class="gbtn"><svg class="ic16"><use href="#tend"/></svg></div>
      </div>
      <div class="drop w-sync ml5">No Sync<svg class="ud"><use href="#updown"/></svg></div>
      <div class="wgroup ml16"><div class="gbtn"><svg class="ic16"><use href="#record"/></svg></div></div>
      <div class="ddicon w-key ml5"><svg class="ic16"><use href="#diamond"/></svg><svg class="ud"><use href="#updown"/></svg></div>
      <div class="wgroup ml5">
        <div class="gfield w-kset"><svg class="ic16"><use href="#keying"/></svg></div>
        <div class="gbtn"><svg class="ic16"><use href="#key"/></svg></div>
        <div class="gbtn"><svg class="ic16"><use href="#keyx"/></svg></div>
      </div>
    </div>
    <div class="bottomgap"></div>
  </section>

  <section class="rightcol">
    <div class="outliner">
      <span class="corner corner-tr3"></span>
      <div class="hdr ohdr">
        <div class="ddicon"><svg class="ic16"><use href="#outliner"/></svg><svg class="ud"><use href="#updown"/></svg></div>
        <nav class="menu m-out"><span>View</span><span>Search</span></nav>
        <div class="drop w-all">All Scenes<svg class="ud"><use href="#updown"/></svg></div>
      </div>
      <div class="obody">
        <div class="olist">
          <div class="orow o-partial"><svg class="ic16 halo"><use href="#world"/></svg><span class="oname">World</span></div>
          <div class="orow alt"><i class="exp"></i><svg class="ic16"><use href="#camobj"/></svg><span class="oname">Camera</span><i class="bar"></i><svg class="ic18 mlicon"><use href="#camgray"/></svg><span class="ocols"><svg class="ic14"><use href="#eye"/></svg><svg class="ic14"><use href="#arrow"/></svg><svg class="ic14"><use href="#rcam"/></svg></span></div>
          <div class="orow"><i class="exp"></i><svg class="ic16"><use href="#mesh"/></svg><span class="oname">Cylinder</span><i class="bar"></i><svg class="ic16 mlicon"><use href="#meshg"/></svg><span class="ocols"><svg class="ic14"><use href="#eye"/></svg><svg class="ic14"><use href="#arrow"/></svg><svg class="ic14"><use href="#rcam"/></svg></span></div>
          <div class="orow alt"><i class="exp"></i><svg class="ic16 halo2"><use href="#mesh"/></svg><span class="oname white">Cylinder.001</span><i class="bar"></i><svg class="ic16 mlicon"><use href="#meshg"/></svg><span class="ocols"><svg class="ic14"><use href="#eye"/></svg><svg class="ic14"><use href="#arrow"/></svg><svg class="ic14"><use href="#rcam"/></svg></span></div>
          <div class="orow"><i class="exp"></i><svg class="ic16"><use href="#lamp"/></svg><span class="oname">Lamp</span><i class="bar"></i><svg class="ic16 mlicon"><use href="#lampdata"/></svg><span class="ocols"><svg class="ic14"><use href="#eye"/></svg><svg class="ic14"><use href="#arrow"/></svg><svg class="ic14"><use href="#rcam"/></svg></span></div>
        </div>
        <div class="oscroll"><div class="othumb"></div></div>
      </div>
      <div class="ohscroll"><div class="ohthumb"></div></div>
      <span class="corner corner-bl2"></span>
    </div>
    <div class="props">
      <span class="corner corner-tr4"></span>
      <div class="hdr phdr">
        <div class="ddicon"><svg class="ic16"><use href="#propsicon"/></svg><svg class="ud"><use href="#updown"/></svg></div>
        <div class="ptabs">
          <i><svg class="ic16"><use href="#rcam"/></svg></i>
          <i><svg class="ic16"><use href="#renderlayer"/></svg></i>
          <i><svg class="ic16"><use href="#scene"/></svg></i>
          <i><svg class="ic16"><use href="#world"/></svg></i>
          <i><svg class="ic16"><use href="#cube"/></svg></i>
          <i><svg class="ic16"><use href="#link"/></svg></i>
          <i class="on"><svg class="ic16"><use href="#wrench"/></svg></i>
          <i><svg class="ic16"><use href="#meshg"/></svg></i>
          <i><svg class="ic16"><use href="#material"/></svg></i>
          <i><svg class="ic16"><use href="#texture"/></svg></i>
          <i><svg class="ic16"><use href="#particle"/></svg></i>
        </div>
      </div>
      <div class="crumbs">
        <svg class="ic16"><use href="#pin"/></svg>
        <svg class="ic16 crumb2"><use href="#scene"/></svg>
        <i class="tri right small"></i>
        <svg class="ic16 crumb3"><use href="#cube"/></svg>
        <span>Cylinder.001</span>
      </div>
      <div class="drop w-addmod">Add Modifier<svg class="ud"><use href="#updown"/></svg></div>
      <span class="corner corner-bl3"></span>
    </div>
  </section>
</main>

<div class="tooltip">
  <p class="tt1">Current editor type for this area:<span>Info</span></p>
  <p class="tt2">Main menu bar and list of error messages (drag down to expand and display)</p>
  <p class="tt3">Python: Area.type</p>
  <p class="tt4">bpy.data.screens["Default"] ... type</p>
</div>
</body>
</html>
```

FILE: styles.css
```css
* { box-sizing: border-box; }
html, body { margin: 0; padding: 0; }
body {
  width: 1437px; height: 873px; overflow: hidden; position: relative;
  background: #000; color: #141414;
  font: 10.5px/1 "DejaVu Sans", sans-serif; letter-spacing: -.2px;
  display: flex; flex-direction: column;
}
.defs { position: absolute; }
svg { display: block; flex: none; }
.ic16 { width: 16px; height: 16px; }
.ic14 { width: 14px; height: 14px; }
.ic18 { width: 18px; height: 18px; }
.ud { width: 8px; height: 14px; flex: none; }
i { font-style: normal; display: block; flex: none; }

.mt1 { margin-top: 1px; } .mt2 { margin-top: 2px; } .mt3 { margin-top: 3px; } .mt4 { margin-top: 4px; }
.mt5 { margin-top: 5px; } .mt6 { margin-top: 6px; } .mt7 { margin-top: 7px; }
.mt8 { margin-top: 8px; } .mt9 { margin-top: 9px; } .mt10 { margin-top: 10px; }
.mt11 { margin-top: 11px; } .mt12 { margin-top: 12px; }
.ml5 { margin-left: 5px; } .ml6 { margin-left: 6px; } .ml16 { margin-left: 16px; }
.mr3 { margin-right: 3px; }

/* window chrome */
.titlebar {
  height: 17px; flex: none; display: flex; align-items: center; position: relative;
  background: linear-gradient(#ebe9eb, #d5d3d5);
  border-bottom: 1px solid #a9a9a9;
}
.lights { display: flex; gap: 8px; padding-left: 5px; }
.lights i { width: 12px; height: 12px; border-radius: 50%; background: #a9a7a9; border: 1px solid #9a989a; }
.doc { position: absolute; left: 652px; top: 0; height: 15px; display: flex; align-items: center; gap: 6px; font: 13px "Liberation Sans", sans-serif; letter-spacing: .35px; color: #444; }
.docicon { width: 12px; height: 14px; }

/* top info bar */
.topbar {
  height: 28px; flex: none; position: relative; display: flex; align-items: center;
  padding: 3px 0 0 6px; background: #727272; border-bottom: 1px solid #0d0d0d;
}
.ddicon {
  width: 30px; height: 20px; flex: none; display: flex; align-items: center; justify-content: center; gap: 1px;
  border: 1px solid #2e2e2e; border-radius: 5px; background: linear-gradient(#5d5d5d, #363636);
}
.menu { display: flex; gap: 20px; flex: none; color: #141414; }
.m-top { width: 201px; padding-left: 11px; }
.m-3d { width: 193px; padding-left: 12px; gap: 20.4px; }
.m-time { width: 222px; padding-left: 12px; gap: 20.5px; }
.m-out { width: 104px; padding-left: 12px; gap: 22px; }

.wgroup {
  display: flex; height: 20px; flex: none; border: 1px solid #2e2e2e; border-radius: 5px; overflow: hidden; background: #8a8a8a;
}
.w-screen { width: 191px; }
.gicon {
  width: 31px; flex: none; display: flex; align-items: center; justify-content: center; gap: 1px;
  background: linear-gradient(#5d5d5d, #363636);
}
.gfield {
  flex: 1; display: flex; align-items: center; padding-left: 7px;
  background: linear-gradient(#a0a0a0, #8a8a8a); color: #141414;
}
.gbtn {
  width: 20px; flex: none; display: flex; align-items: center; justify-content: center;
  background: linear-gradient(#a0a0a0, #747474); border-left: 1px solid #2e2e2e;
}
.wgroup .gbtn:first-child { width: 19px; border-left: 0; }
.wgroup .gbtn:last-child { width: 19px; }
.wgroup .gbtn:only-child { width: 18px; }
.wgroup .gbtn.w-sg { width: 14px; }
.gbtn.blue { background: linear-gradient(#6c9be0, #4a78c0); }
.drop {
  height: 20px; display: flex; align-items: center; justify-content: space-between; flex: none;
  padding: 0 4px 0 7px; border: 1px solid #2e2e2e; border-radius: 5px; color: #e8e8e8;
  background: linear-gradient(#575757, #333);
}
.full { width: 100%; }
.w-render { width: 111px; margin-left: 16px; }
.toplogo { width: 18px; height: 16px; margin-left: 18px; }
.stats { margin-left: 8px; color: #141414; white-space: nowrap; letter-spacing: -.14px; }

/* layout */
.workspace { flex: 1; min-height: 0; display: flex; }
.leftcol { width: 1177px; flex: none; display: flex; flex-direction: column; border-right: 1px solid #0d0d0d; }
.rightcol { width: 260px; flex: none; display: flex; flex-direction: column; background: #0d0d0d; }

.view3d { height: 719px; flex: none; display: flex; }
.shelfcol { width: 157px; flex: none; display: flex; flex-direction: column; border-right: 1px solid #333; }
.shelftop { height: 503px; flex: none; display: flex; background: #3c3c3c; }
.tabs { width: 16px; flex: none; display: flex; flex-direction: column; }
.tab {
  writing-mode: vertical-rl; transform: rotate(180deg); width: 16px; flex: none;
  display: flex; align-items: center; justify-content: center; background: #666; color: #141414;
  border-radius: 0 4px 4px 0;
}
.tab.active { background: #727272; }
.t-tools { height: 38px; margin-top: 5px; }
.t-create { height: 40px; margin-top: 5px; }
.t-rel { height: 56px; margin-top: 8px; }
.t-anim { height: 61px; margin-top: 6px; }
.t-phys { height: 48px; margin-top: 6px; }
.t-gp { height: 79px; margin-top: 5px; }

.shelf { width: 140px; flex: none; background: #727272; padding: 0 8px 0 9px; display: flex; flex-direction: column; }
.phead { height: 20px; flex: none; display: flex; align-items: center; position: relative; font-size: 11.5px; letter-spacing: -.1px; color: #141414; padding-left: 17px; white-space: nowrap; }
.haschk { padding-left: 37px; }
.grip { position: absolute; right: 2px; top: 8px; width: 12px; height: 5px; }
.tri { width: 0; height: 0; position: absolute; }
.tri.down { left: 5px; top: 6px; border: 4.5px solid transparent; border-top: 8px solid #1e1e1e; border-bottom: 0; }
.tri.right { left: 5px; top: 6px; border: 4.5px solid transparent; border-left: 8px solid #3e3e3e; border-right: 0; }
.tri.right.small { position: static; border-width: 3px; border-left-width: 4px; border-left-color: #444; }
.label { height: 16px; flex: none; display: flex; align-items: center; padding-left: 8px; color: #141414; white-space: nowrap; }
.faded { color: #5a5a5a; overflow: hidden; }
.sep { height: 1px; flex: none; background: #4b4b4b; margin-left: -3px; margin-right: -3px; }
.btn {
  display: flex; align-items: center; padding-left: 7px; color: #141414; white-space: nowrap; overflow: hidden;
  background: linear-gradient(#a6a6a6, #787878);
}
.single { height: 19px; flex: none; border: 1px solid #2e2e2e; border-radius: 5px; padding-top: 1px; }
.center { justify-content: center; padding-left: 0; }
.grp { display: flex; flex-direction: column; height: 60px; flex: none; border: 1px solid #2e2e2e; border-radius: 5px; overflow: hidden; }
.row { height: 20px; flex: none; border-top: 1px solid #2e2e2e; }
.row:first-child { height: 19px; border-top: 0; }
.row:last-child { height: 19px; }
.pill { height: 19px; border-radius: 9px; }
.pill .row { height: 17px; }
.two { height: 39px; border-radius: 9px; }
.two .row:first-child { height: 18px; }
.split { display: flex; height: 19px; flex: none; border: 1px solid #2e2e2e; border-radius: 5px; overflow: hidden; }
.s60 { width: 60px; flex: none; border-right: 1px solid #2e2e2e; }
.sflex { flex: 1; min-width: 0; }

.operator { flex: 1; background: #727272; padding: 0 9px 0 0; border-top: 1px solid #5a5a5a; }
.ophead { margin-top: 2px; margin-left: 5px; }
.ophead .tri { left: 5px; }

.canvas { width: 840px; flex: none; position: relative; background: #393939; }
.scene3d { position: absolute; inset: 0; }
.overlay { font: 10.5px "DejaVu Sans", sans-serif; letter-spacing: -.2px; fill: #f0f0f0; }
.overlay.dim { fill: #5c5c5c; }
.axis { font: 700 9px "DejaVu Sans", sans-serif; }
.az { fill: #1212c8; } .ax { fill: #c81212; } .ay { fill: #12c812; }

.npanel { width: 179px; flex: none; position: relative; display: flex; background: #727272; overflow: hidden; }
.ncontent { width: 163px; flex: none; padding: 0 9px 0 8px; display: flex; flex-direction: column; }
.vecrow { display: flex; justify-content: space-between; flex: none; }
.fields { width: 109px; border-radius: 9px; }
.locks { width: 28px; }
.lockb { display: flex; align-items: center; justify-content: center; background: linear-gradient(#9a9a9a, #7a7a7a); }
.wide { width: 100%; border-radius: 9px; }
.num {
  display: flex; align-items: center; padding: 1px 4px 0 5px; color: #141414;
  background: linear-gradient(#8e8e8e, #b0b0b0);
}
.pill .num, .two .row:first-child { padding-top: 0; }
.num span { margin-left: 6px; }
.num b { font-weight: 400; margin-left: auto; margin-right: 6px; }
.al, .ar { width: 0; height: 0; border: 3px solid transparent; }
.al { border-right: 4px solid #6a6a6a; border-left: 0; }
.ar { border-left: 4px solid #6a6a6a; border-right: 0; }
.nsep { margin-left: -7px; margin-right: -8px; }
.check {
  position: absolute; left: 17px; top: 3px; width: 14px; height: 14px; border: 1px solid #2e2e2e; border-radius: 3px; background: #666;
}
.check::after { content: ""; position: absolute; left: 3px; top: 0; width: 5px; height: 9px; border: solid #eee; border-width: 0 2px 2px 0; transform: rotate(40deg); }
.tabs2 { display: flex; height: 20px; flex: none; border: 1px solid #2e2e2e; border-radius: 5px; overflow: hidden; }
.tab2 { width: 72px; flex: none; display: flex; align-items: center; justify-content: center; color: #e8e8e8; background: linear-gradient(#575757, #333); }
.tab2 + .tab2 { flex: 1; }
.tab2.on { background: linear-gradient(#5f90dc, #3f6fc0); color: #0c1a33; border-right: 1px solid #2e2e2e; }
.newrow { display: flex; height: 20px; flex: none; border: 1px solid #2e2e2e; border-radius: 5px; overflow: hidden; }
.pen { width: 31px; }
.newbody { flex: 1; display: flex; align-items: center; position: relative; padding-left: 3px; background: linear-gradient(#a6a6a6, #787878); }
.newbody span { margin-left: 34px; }
.objfield { height: 19px; flex: none; display: flex; align-items: center; justify-content: space-between; padding: 0 1px 0 4px; border: 1px solid #2e2e2e; border-radius: 4px; background: linear-gradient(#8e8e8e, #a8a8a8); }
.chk { height: 17px; flex: none; display: flex; align-items: center; gap: 8px; padding-left: 3px; color: #141414; }
.chk i { width: 14px; height: 14px; border-radius: 4px; border: 1px solid #2e2e2e; background: linear-gradient(#4a4a4a, #5c5c5c); }
.nscroll { width: 13px; height: 712px; flex: none; margin-top: 3px; border: 1px solid #5a5a5a; border-radius: 7px; background: #5f5f5f; overflow: hidden; }
.nthumb { height: 417px; background: linear-gradient(90deg, #909090, #7a7a7a); border-radius: 6px; border-bottom: 1px solid #444; }

/* corners */
.corner {
  position: absolute; width: 9px; height: 9px; z-index: 3;
  background: repeating-linear-gradient(135deg, #cfcfcf 0 1px, #222 1px 2px, transparent 2px 3px);
}
.corner-tl, .corner-bl, .corner-bl2 { left: 0; bottom: 0; clip-path: polygon(0 0, 0 100%, 100% 100%); }
.corner-tr, .corner-tr2, .corner-tr3, .corner-tr4 { right: 0; top: 0; clip-path: polygon(0 0, 100% 0, 100% 100%); }
.corner-bl3 { left: 0; bottom: 0; width: 11px; height: 13px; clip-path: polygon(0 0, 0 100%, 100% 100%); }

/* headers */
.hdr { flex: none; display: flex; align-items: center; position: relative; background: #727272; padding-left: 6px; }
.hdr3d { height: 27px; border-bottom: 1px solid #0d0d0d; }
.hdrtime { height: 25px; padding-top: 1px; }
.bottomgap { flex: 1; background: #050505; }
.w-mode { width: 113px; justify-content: flex-start; padding-left: 4px; }
.w-mode .ud { margin-left: auto; }
.w-shade { width: 35px; justify-content: space-around; }
.w-piv { width: 34px; }
.darkdrop { width: 70px; flex: none; display: flex; align-items: center; justify-content: space-between; padding: 0 4px 0 7px; color: #e8e8e8; background: linear-gradient(#575757, #333); }
.layers { width: 50px; height: 20px; flex: none; display: grid; grid-template-columns: repeat(5, 1fr); grid-template-rows: 1fr 1fr; position: relative; border: 1px solid #2e2e2e; border-radius: 4px; overflow: hidden; background: #2e2e2e; gap: 1px; }
.layers i { background: linear-gradient(#a0a0a0, #8a8a8a); }
.layers.first::after { content: ""; position: absolute; left: 2px; top: 2px; width: 5px; height: 5px; background: #e88b26; border: 1px solid #222; }
.w-snap { width: 40px; border-left: 1px solid #2e2e2e; }

.timeline { height: 52px; flex: none; position: relative; display: flex; flex-direction: column; background: #727272; }
.tracks {
  height: 35px; flex: none; display: flex;
  background-image: repeating-linear-gradient(90deg, transparent 0 33.35px, rgba(40,40,40,.3) 33.35px 34.35px);
  background-position: 25.65px 0;
}
.outrange { background: rgba(30,30,30,.6); }
.r-left { width: 199px; }
.r-right { width: 114px; }
.playhead { width: 2px; background: #5cbc3c; }
.inrange { flex: 1; }
.ruler {
  height: 14px; flex: none; margin: 0 5px 0 1px; display: flex; align-items: center; padding-left: 24.65px; position: relative;
  border: 1px solid #3c3c3c; border-radius: 7px; background: linear-gradient(#818181, #a2a2a2); white-space: nowrap; overflow: hidden;
}
.ruler::before { content: ""; position: absolute; left: 0; top: 0; width: 10px; height: 12px; border-radius: 6px; background: #666; }
.ruler span { width: 68.7px; flex: none; text-align: center; }

.w-range { width: 226px; flex-direction: row; height: 20px; border-radius: 10px; }
.w-cur { width: 90px; height: 20px; border-radius: 10px; }
.rangecell { height: 100%; }
.c-start { width: 116px; border-right: 1px solid #2e2e2e; }
.c-end { flex: 1; }
.c-cur { width: 100%; }
.w-sync { width: 115px; }
.w-key { width: 35px; justify-content: space-around; }
.w-kset { width: 130px; padding-left: 3px; flex: none; }

/* right side */
.outliner { height: 137px; flex: none; position: relative; background: #6e6e6e; border-left: 1px solid #0d0d0d; }
.ohdr { height: 26px; background: #727272; padding: 3px 0 0 9px; border-bottom: 1px solid #555; }
.w-all { width: 130px; }
.obody { height: 96px; display: flex; position: relative; overflow: hidden; }
.olist { flex: 1; display: flex; flex-direction: column; position: relative; }
.olist::before { content: ""; position: absolute; left: 26px; top: 0; width: 1px; height: 80px; background: #3a3a3a; z-index: 1; }
.orow { height: 20px; flex: none; display: flex; align-items: center; position: relative; padding-left: 23px; }
.orow.alt { background: #737373; }
.o-partial { margin-top: -5px; padding-left: 41px; }
.halo { border-radius: 50%; background: #8a8a9a; }
.halo2 { border-radius: 50%; background: #b58a5c; }
.exp { width: 9px; height: 9px; border-radius: 50%; border: 1px solid #222; background: #c8c8c8; margin-right: 9px; position: relative; z-index: 2; }
.exp::before { content: ""; position: absolute; left: 8px; top: 3px; width: 9px; height: 1px; background: #3a3a3a; }
.exp::after { content: "+"; position: absolute; inset: -2px 0 0 0; font: 9px/9px "DejaVu Sans", sans-serif; text-align: center; color: #111; }
.oname { margin-left: 3px; white-space: nowrap; }
.white { color: #f0f0f0; }
.bar { width: 2px; height: 12px; background: #3c3c3c; margin-left: 10px; }
.mlicon { margin-left: 8px; }
.ocols { position: absolute; left: 181px; top: 0; height: 100%; width: 60px; padding-left: 2px; display: grid; grid-template-columns: repeat(3, 20px); align-items: center; justify-items: center; background: linear-gradient(90deg, #606060 1px, transparent 1px) 0 0/20px 100%; }
.oscroll { width: 14px; flex: none; background: #6a6a6a; padding: 5px 1px 3px; }
.othumb { height: 100%; margin: 0 1px; border: 1px solid #555; border-radius: 6px; background: linear-gradient(#5c5c5c 0 32%, #8f8f8f 32%); }
.ohscroll { height: 15px; padding: 2px 19px 1px 3px; background: #6e6e6e; }
.ohthumb { height: 12px; border-radius: 6px; border: 1px solid #555; background: linear-gradient(90deg, #959595 0 80%, #5c5c5c 80%); }
.props { flex: 1; margin-top: 3px; position: relative; background: #727272; border-left: 1px solid #0d0d0d; }
.phdr { height: 27px; padding-left: 9px; background: #727272; border-bottom: 1px solid #555; }
.ptabs { display: flex; margin-left: 8px; flex: none; border-radius: 4px 0 0 4px; overflow: hidden; border: 1px solid #2e2e2e; border-right: 0; }
.ptabs i { width: 20px; height: 20px; display: flex; align-items: center; justify-content: center; background: linear-gradient(#4a4a4a, #383838); border-left: 1px solid #2a2a2a; }
.ptabs i:first-child { border-left: 0; }
.ptabs i.on { background: linear-gradient(#5f90dc, #3f6fc0); }
.crumbs { height: 20px; margin-top: 8px; display: flex; align-items: center; padding-left: 9px; color: #141414; }
.crumb2 { margin-left: 8px; }
.crumbs .small { margin-left: 5px; }
.crumb3 { margin-left: 15px; }
.crumbs span { margin-left: 3px; }
.w-addmod { width: 242px; margin: 16px 0 0 9px; }

/* tooltip */
.tooltip {
  position: absolute; left: 27px; top: 47px; width: 406px; height: 88px; padding: 13px 13px 0;
  background: rgba(22,22,22,.9); border-radius: 5px; box-shadow: 0 0 3px rgba(0,0,0,.4); z-index: 5; color: #eee;
  letter-spacing: -.38px;
}
.tooltip p { margin: 0; white-space: nowrap; }
.tt1 { color: #f4f4f4; }
.tt1 span { color: #8fb0dc; margin-left: 6px; }
.tooltip .tt2 { margin-top: 9px; color: #dcdcdc; }
.tooltip .tt3, .tooltip .tt4 { font-family: "DejaVu Sans Mono", monospace; font-size: 10px; letter-spacing: 0; color: #7d7d7d; }
.tooltip .tt3 { margin-top: 11px; }
.tooltip .tt4 { margin-top: 5px; }
```
